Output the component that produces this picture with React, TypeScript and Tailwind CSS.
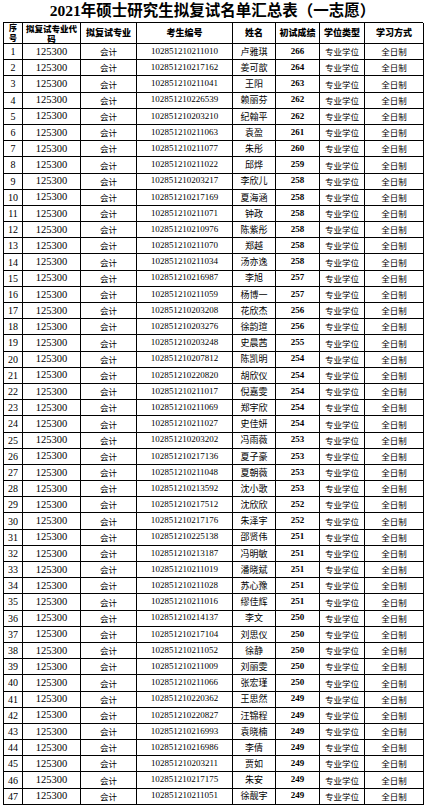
const rows: [string, string, number][] = [
  ['11010', '卢雅琪', 266],
  ['17162', '姜可歆', 264],
  ['11041', '王阳', 263],
  ['26539', '赖丽芬', 262],
  ['03210', '纪翰平', 262],
  ['11063', '袁盈', 261],
  ['11077', '朱彤', 260],
  ['11022', '邱烨', 259],
  ['03217', '李欣儿', 258],
  ['17169', '夏海涵', 258],
  ['11071', '钟政', 258],
  ['10976', '陈紫彤', 258],
  ['11070', '郑越', 258],
  ['11034', '汤亦逸', 258],
  ['16987', '李旭', 257],
  ['11059', '杨博一', 257],
  ['03208', '花欣杰', 256],
  ['03276', '徐韵瑄', 256],
  ['03248', '史晨茜', 255],
  ['07812', '陈凯明', 254],
  ['20820', '胡欣仪', 254],
  ['11017', '倪嘉雯', 254],
  ['11069', '郑宇欣', 254],
  ['11027', '史佳妍', 254],
  ['03202', '冯雨薇', 253],
  ['17136', '夏子豪', 253],
  ['11048', '夏朝薇', 253],
  ['13592', '沈小歌', 253],
  ['17512', '沈欣欣', 252],
  ['17176', '朱泽宇', 252],
  ['25138', '邵贤伟', 251],
  ['13187', '冯明敏', 251],
  ['11019', '潘晓斌', 251],
  ['11028', '苏心豫', 251],
  ['11016', '缪佳辉', 251],
  ['14137', '李文', 250],
  ['17104', '刘思仪', 250],
  ['11052', '徐静', 250],
  ['11009', '刘丽雯', 250],
  ['11066', '张宏瑾', 250],
  ['20362', '王思然', 249],
  ['20827', '汪锦程', 249],
  ['16993', '袁晓楠', 249],
  ['16986', '李倩', 249],
  ['03211', '贾如', 249],
  ['17175', '朱安', 249],
  ['11051', '徐靓宇', 249],
];

const cell = 'flex items-center justify-center border-r border-b border-black overflow-hidden';
const serif = "font-['Liberation_Serif','Noto_Sans_CJK_SC',serif]";
const cjk = "font-['Noto_Sans_CJK_SC',sans-serif]";

export default function App() {
  return (
    <div className="w-[425px] h-[810px] bg-white text-black overflow-hidden">
      {/* Title */}
      <div className={`h-[22px] flex items-center justify-center text-[15.5px] font-bold leading-none ${serif}`}>
        2021年硕士研究生拟复试名单汇总表（一志愿）
      </div>

      {/* Table */}
      <div className="ml-[3px] w-[420px] border-l border-t border-black grid grid-cols-[19px_58px_56px_96px_43px_44px_45px_59px]">
        {/* Header */}
        <div className={`${cell} h-[21px] flex-col text-[8px] font-black leading-[10px] ${cjk}`}>
          <span>序</span>
          <span>号</span>
        </div>
        <div className={`${cell} h-[21px] text-[8.5px] font-black leading-[10px] text-center ${cjk}`}>
          拟复试专业代码
        </div>
        {['拟复试专业', '考生编号', '姓名', '初试成绩', '学位类型', '学习方式'].map((h) => (
          <div key={h} className={`${cell} h-[21px] text-[9px] font-black ${cjk}`}>
            {h}
          </div>
        ))}

        {/* Body */}
        {rows.map(([id, name, score], i) => (
          <div key={id + i} className="contents">
            <div className={`${cell} h-[16.2px] text-[10px] ${serif}`}>{i + 1}</div>
            <div className={`${cell} h-[16.2px] text-[10.5px] ${serif}`}>125300</div>
            <div className={`${cell} h-[16.2px] text-[8.5px] ${cjk}`}>会计</div>
            <div className={`${cell} h-[16.2px] text-[9px] ${serif}`}>1028512102{id}</div>
            <div className={`${cell} h-[16.2px] text-[9px] ${cjk}`}>{name}</div>
            <div className={`${cell} h-[16.2px] text-[9px] font-bold ${serif}`}>{score}</div>
            <div className={`${cell} h-[16.2px] text-[8.5px] ${cjk}`}>专业学位</div>
            <div className={`${cell} h-[16.2px] text-[8.5px] ${cjk}`}>全日制</div>
          </div>
        ))}
      </div>
    </div>
  );
}
